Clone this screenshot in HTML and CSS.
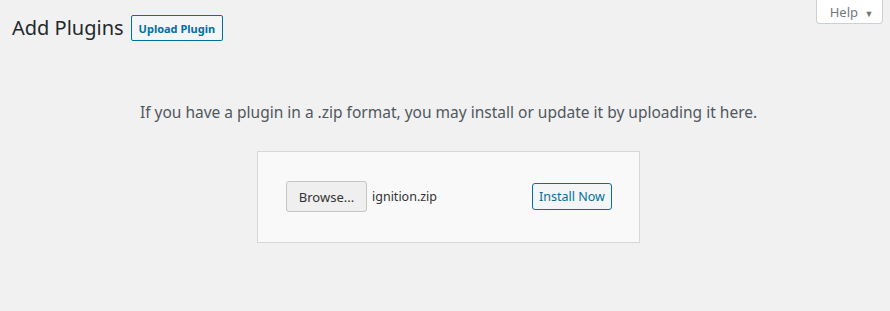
FILE: index.html
```html
<!DOCTYPE html>
<html lang="en">
<head>
    <meta charset="UTF-8">
    <meta name="viewport" content="width=device-width, initial-scale=1.0">
    <title>Add Plugins</title>
    <link rel="stylesheet" href="styles.css">
</head>
<body>
    <div class="wrap">
        <div class="top-bar">
            <div class="page-head">
                <h1>Add Plugins</h1>
                <button class="title-btn">Upload Plugin</button>
            </div>
            <button class="help-tab">Help <span class="arrow">&#9660;</span></button>
        </div>

        <div class="upload-plugin">
            <p class="install-help">If you have a plugin in a .zip format, you may install or update it by uploading it here.</p>

            <form class="upload-form">
                <div class="file-input">
                    <button type="button" class="browse-btn">Browse...</button>
                    <span class="file-name">ignition.zip</span>
                </div>
                <button type="button" class="install-btn">Install Now</button>
            </form>
        </div>
    </div>
</body>
</html>
```

FILE: styles.css
```css
* {
    margin: 0;
    padding: 0;
    box-sizing: border-box;
}

body {
    font-family: "Noto Sans", "Open Sans", sans-serif;
    background: #f1f1f1;
    color: #444;
    min-height: 100vh;
}

.wrap {
    padding: 0 5px 0 12px;
}

.top-bar {
    display: flex;
    justify-content: space-between;
    align-items: flex-start;
}

.page-head {
    display: flex;
    align-items: center;
    gap: 7px;
    padding-top: 15px;
}

h1 {
    font-size: 20px;
    font-weight: 400;
    color: #23282d;
    line-height: 26px;
}

.title-btn {
    font-family: inherit;
    height: 26px;
    padding: 0 7px;
    font-size: 11px;
    font-weight: 700;
    color: #0071a1;
    background: #f3f5f6;
    border: 1px solid #0071a1;
    border-radius: 2px;
    cursor: pointer;
}

.help-tab {
    font-family: inherit;
    width: 67px;
    height: 24px;
    margin-right: 2px;
    padding-left: 4px;
    font-size: 13px;
    color: #72777c;
    background: #fff;
    border: 1px solid #ccd0d4;
    border-top: none;
    border-radius: 0 0 4px 4px;
    cursor: pointer;
}

.help-tab .arrow {
    font-size: 9px;
    margin-left: 3px;
    color: #72777c;
}

.upload-plugin {
    display: flex;
    flex-direction: column;
    align-items: center;
    padding-top: 59px;
}

.install-help {
    font-size: 15.5px;
    color: #50575e;
    line-height: 24px;
    margin-bottom: 27px;
}

.upload-form {
    display: flex;
    align-items: center;
    width: 383px;
    padding: 29px 27px 30px 28px;
    background: #f9f9f9;
    border: 1px solid #d5d7d9;
}

.file-input {
    display: flex;
    align-items: center;
    gap: 5px;
}

.browse-btn {
    font-family: inherit;
    width: 81px;
    height: 31px;
    font-size: 13px;
    color: #333;
    background: #efefef;
    border: 1px solid #c5c5c5;
    border-radius: 3px;
    cursor: pointer;
}

.file-name {
    font-size: 12.5px;
    color: #333;
}

.install-btn {
    font-family: inherit;
    margin-left: auto;
    width: 80px;
    height: 27px;
    font-size: 12.5px;
    color: #0071a1;
    background: #f3f5f6;
    border: 1px solid #0071a1;
    border-radius: 3px;
    cursor: pointer;
}
```
